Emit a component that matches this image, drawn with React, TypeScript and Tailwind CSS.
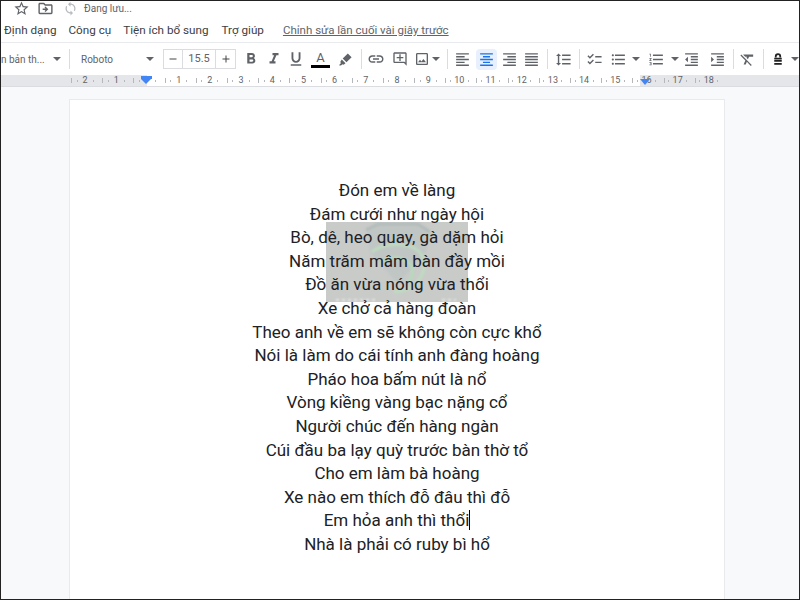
import { MdStarBorder, MdOutlineDriveFileMove, MdSync, MdRemove, MdAdd, MdFormatBold, MdFormatItalic, MdFormatUnderlined, MdLink, MdOutlineAddComment, MdOutlineImage, MdFormatAlignLeft, MdFormatAlignCenter, MdFormatAlignRight, MdFormatAlignJustify, MdFormatLineSpacing, MdChecklist, MdFormatListBulleted, MdFormatListNumbered, MdFormatIndentDecrease, MdFormatIndentIncrease, MdFormatClear } from 'react-icons/md';

const lines = [
  'Đón em về làng',
  'Đám cưới như ngày hội',
  'Bò, dê, heo quay, gà dặm hỏi',
  'Năm trăm mâm bàn đầy mồi',
  'Đồ ăn vừa nóng vừa thổi',
  'Xe chở cả hàng đoàn',
  'Theo anh về em sẽ không còn cực khổ',
  'Nói là làm do cái tính anh đàng hoàng',
  'Pháo hoa bấm nút là nổ',
  'Vòng kiềng vàng bạc nặng cổ',
  'Người chúc đến hàng ngàn',
  'Cúi đầu ba lạy quỳ trước bàn thờ tổ',
  'Cho em làm bà hoàng',
  'Xe nào em thích đỗ đâu thì đỗ',
];

const rulerLabels = ['2', '1', '', '1', '2', '3', '4', '5', '6', '7', '8', '9', '10', '11', '12', '13', '14', '15', '16', '17', '18'];

function Caret() {
  return <span className="w-0 h-0 border-x-[4px] border-x-transparent border-t-[4px] border-t-[#5f6368]" />;
}

function Sep() {
  return <span className="w-px h-[20px] bg-[#dadce0]" />;
}

function RulerCell({ label }: { label: string }) {
  return (
    <span className="w-[31.2px] h-[11px] flex items-center justify-between px-[2px]">
      <span className="w-px h-[5px] bg-[#b4b7bb]" />
      <span className="w-px h-[2px] bg-[#b4b7bb]" />
      <span className="text-center leading-[11px] min-w-[6px]">{label}</span>
      <span className="w-px h-[2px] bg-[#b4b7bb]" />
      <span className="w-0" />
    </span>
  );
}

export default function App() {
  return (
    <div className="w-[800px] h-[600px] overflow-hidden flex flex-col bg-white border border-[#222] font-['Roboto',sans-serif] text-[#3c4043]">
      <div className="h-[14px] flex items-center shrink-0 pl-[12px]">
        <MdStarBorder className="text-[17px] text-[#5f6368]" />
        <MdOutlineDriveFileMove className="text-[17px] text-[#5f6368] ml-[7px]" />
        <MdSync className="text-[15px] text-[#b8bbbf] ml-[9px]" />
        <span className="ml-[6px] text-[10px] text-[#5f6368]">Đang lưu...</span>
      </div>

      <div className="h-[27px] flex items-center shrink-0 text-[11.7px] pl-[3px] pt-[4px]">
        <span>Định dạng</span>
        <span className="ml-[12px]">Công cụ</span>
        <span className="ml-[12px]">Tiện ích bổ sung</span>
        <span className="ml-[13px]">Trợ giúp</span>
        <span className="ml-[19px] text-[11.5px] underline text-[#5f6368]">Chỉnh sửa lần cuối vài giây trước</span>
      </div>

      <div className="h-[33px] shrink-0 flex items-center border-t border-[#e8eaed] text-[#5f6368]">
        <span className="w-[47px] text-[10px] whitespace-nowrap">n bản th...</span>
        <span className="ml-[5px] flex"><Caret /></span>
        <span className="ml-[8px] flex"><Sep /></span>
        <span className="ml-[14px] w-[62px] text-[10px] -translate-x-[3px]">Roboto</span>
        <Caret />
        <div className="ml-[9px] w-[73px] h-[20px] border border-[#dadce0] flex items-center text-[11px]">
          <span className="w-[19px] flex justify-center border-r border-[#dadce0] h-full items-center"><MdRemove className="text-[12px] text-[#444]" /></span>
          <span className="w-[33px] text-center border-r border-[#dadce0] h-full leading-[18px]">15.5</span>
          <span className="flex-1 flex justify-center"><MdAdd className="text-[12px] text-[#444]" /></span>
        </div>
        <MdFormatBold className="ml-[6px] text-[18px]" />
        <MdFormatItalic className="ml-[5px] text-[18px]" />
        <MdFormatUnderlined className="ml-[4px] text-[18px]" />
        <div className="ml-[6px] w-[19px] flex flex-col items-center">
          <span className="text-[13px] leading-[14px] text-[#5f6368]">A</span>
          <span className="w-full h-[3px] bg-black" />
        </div>
        <svg viewBox="0 0 16 16" className="ml-[8px] w-[15px] h-[15px] shrink-0" fill="currentColor">
          <path d="M10.5 1.5l4 4-5.5 5.5-4-4z" />
          <path d="M4 8l4 4-2 1.5-1-.5-2 1.5-2-.5 2-2-.5-1.500z" />
        </svg>
        <span className="ml-[8px] flex"><Sep /></span>
        <MdLink className="ml-[5px] text-[18px]" />
        <MdOutlineAddComment className="ml-[7px] text-[16px]" />
        <MdOutlineImage className="ml-[6px] text-[16px]" />
        <span className="ml-[2px] flex"><Caret /></span>
        <span className="ml-[7px] flex"><Sep /></span>
        <MdFormatAlignLeft className="ml-[6px] text-[17px]" />
        <span className="ml-[5px] w-[21px] h-[21px] bg-[#e8f0fe] rounded-sm flex items-center justify-center">
          <MdFormatAlignCenter className="text-[17px] text-[#1a73e8]" />
        </span>
        <MdFormatAlignRight className="ml-[4px] text-[17px]" />
        <MdFormatAlignJustify className="ml-[5px] text-[17px]" />
        <span className="ml-[7px] flex"><Sep /></span>
        <MdFormatLineSpacing className="ml-[7px] text-[17px]" />
        <span className="ml-[7px] flex"><Sep /></span>
        <MdChecklist className="ml-[6px] text-[17px]" />
        <MdFormatListBulleted className="ml-[7px] text-[17px]" />
        <span className="ml-[5px] flex"><Caret /></span>
        <MdFormatListNumbered className="ml-[8px] text-[17px]" />
        <span className="ml-[6px] flex"><Caret /></span>
        <MdFormatIndentDecrease className="ml-[4px] text-[17px]" />
        <MdFormatIndentIncrease className="ml-[9px] text-[17px]" />
        <span className="ml-[7px] flex"><Sep /></span>
        <MdFormatClear className="ml-[5px] text-[17px]" />
        <span className="ml-[7px] flex"><Sep /></span>
        <svg viewBox="0 0 16 16" className="ml-[8px] w-[12px] h-[16px] shrink-0 text-[#222]" fill="none" stroke="currentColor" strokeWidth="2.4">
          <path d="M5 6V4.500a3 3 0 0 1 6 0V6" />
          <path d="M3 7.500h10M3 10.500h10" />
          <path d="M3 14.500h10" />
        </svg>
        <span className="ml-[7px] flex"><Caret /></span>
      </div>

      <div className="h-[12px] shrink-0 relative flex bg-[#e4e6e9] border-b border-[#dadce0] text-[9px] text-[#5f6368]">
        <div className="ml-[146px] w-[493px] h-full bg-white" />
        <div className="absolute left-0 top-0 flex pl-[68px]">
          {rulerLabels.map((label, i) => (
            <RulerCell key={i} label={label} />
          ))}
        </div>
        <span className="absolute left-[140px] top-[1px] w-[11px] h-[3px] bg-[#4285f4]" />
        <span className="absolute left-[140px] top-[4px] w-0 h-0 border-x-[5.5px] border-x-transparent border-t-[5px] border-t-[#4285f4]" />
        <span className="absolute left-[639px] top-[4px] w-0 h-0 border-x-[5px] border-x-transparent border-t-[6px] border-t-[#4285f4]" />
      </div>

      <div className="flex-1 bg-[#f8f9fa] pt-[12px] pl-[68px] overflow-hidden">
        <div className="relative w-[656px] h-[520px] bg-white border border-[#e8eaed] pt-[79px] text-center text-[17px] leading-[23.6px] text-[#202124]">
          <div className="absolute left-[256px] top-[122px] w-[142px] h-[80px] bg-[#c9cbc9] overflow-hidden">
            <svg viewBox="0 0 142 80" className="w-full h-full blur-[1px]" fill="none">
              <path d="M40 8 L52 2 L92 2 L104 10 L100 30 L72 62 L44 30z" fill="#c0c6c4" />
              <path d="M40 8 L52 2 L92 2 L104 10" stroke="#b2bbb9" strokeWidth="3" />
              <path d="M46 30c10-8 28-10 42-4 10 5 14 18 6 30-6 9-16 14-26 14" stroke="#bedcc0" strokeWidth="3" />
              <path d="M54 42c8-8 20-8 28-2 6 5 6 14 0 20" stroke="#b6dabb" strokeWidth="3" />
              <path d="M10 78h40M116 78h14" stroke="#e6e8e6" strokeWidth="2" strokeDasharray="3 3" />
            </svg>
          </div>
          <div className="relative">
            {lines.map((l) => (
              <p key={l}>{l}</p>
            ))}
            <p className="relative">Em hỏa anh thì thổ<span className="border-r border-black">i</span></p>
            <p>Nhà là phải có ruby bì hổ</p>
          </div>
        </div>
      </div>
    </div>
  );
}
